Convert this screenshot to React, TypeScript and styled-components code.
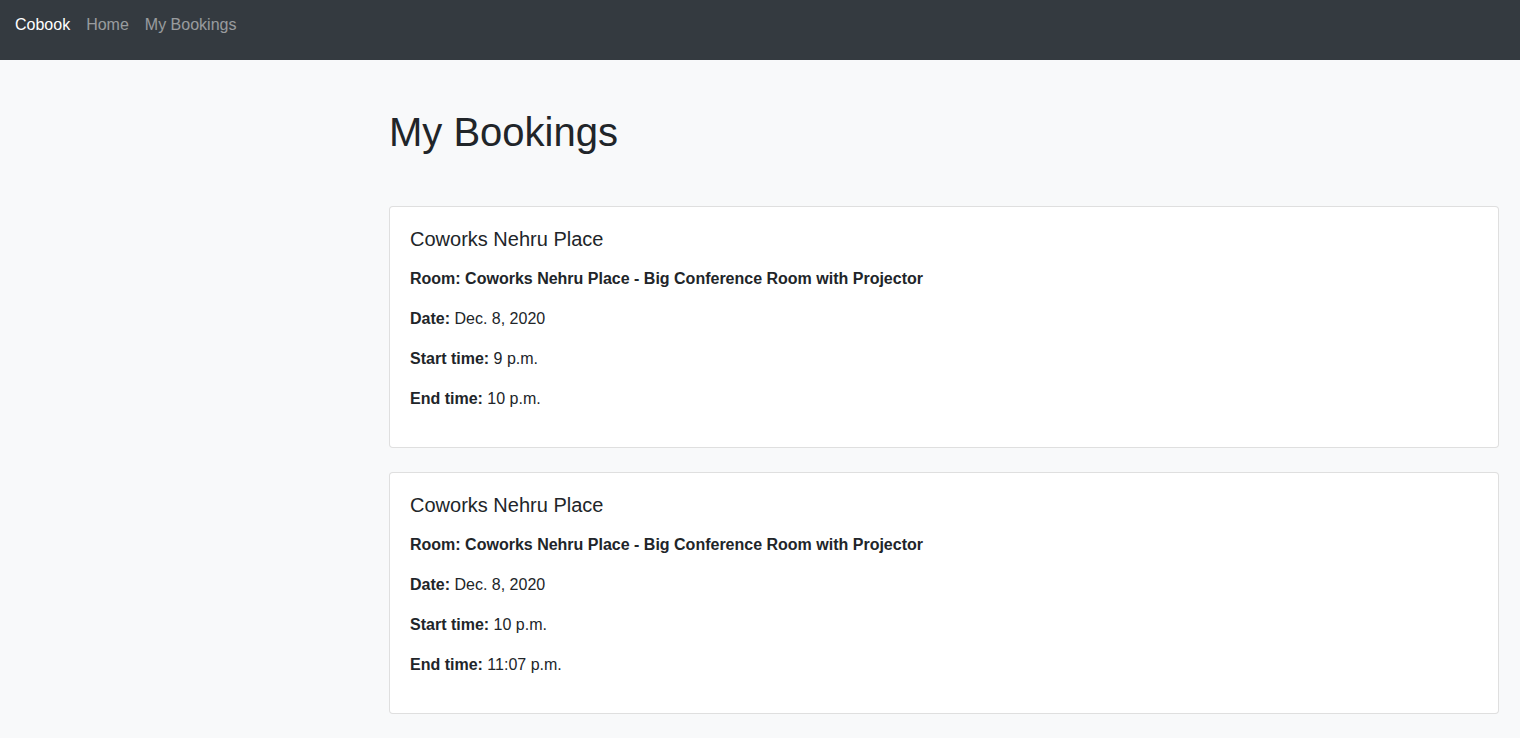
import React from "react";
import styled, { createGlobalStyle } from "styled-components";

const GlobalStyle = createGlobalStyle`
  html, body { margin: 0; padding: 0; }
  body {
    background: #f8f9fa;
    color: #212529;
    font-family: "Liberation Sans", Arial, sans-serif;
    font-size: 16px;
    line-height: 1.5;
  }
  * { box-sizing: border-box; }
`;

const NavBar = styled.nav`
  height: 60px;
  background: #343a40;
  display: flex;
  align-items: flex-start;
  gap: 16px;
  padding: 13px 15px;
`;

const NavLink = styled.a<{ $brand?: boolean }>`
  color: ${(p) => (p.$brand ? "#ffffff" : "rgba(255,255,255,0.5)")};
  text-decoration: none;
  font-size: 16px;
  line-height: 24px;
  cursor: pointer;
`;

const Main = styled.main`
  padding: 48px 21px 24px 389px;
`;

const Title = styled.h1`
  margin: 0 0 50px;
  font-size: 40px;
  font-weight: 400;
  line-height: 48px;
`;

const CardList = styled.div`
  display: flex;
  flex-direction: column;
  gap: 24px;
`;

const Card = styled.div`
  background: #fff;
  border: 1px solid rgba(0, 0, 0, 0.125);
  border-radius: 4px;
  padding: 20px 20px 20px;
`;

const CardTitle = styled.h5`
  margin: 0 0 16px;
  font-size: 20px;
  font-weight: 400;
  line-height: 24px;
`;

const Line = styled.p`
  margin: 0 0 16px;
  line-height: 24px;
`;

const bookings = [
  { place: "Coworks Nehru Place", room: "Coworks Nehru Place - Big Conference Room with Projector", date: "Dec. 8, 2020", start: "9 p.m.", end: "10 p.m." },
  { place: "Coworks Nehru Place", room: "Coworks Nehru Place - Big Conference Room with Projector", date: "Dec. 8, 2020", start: "10 p.m.", end: "11:07 p.m." },
];

export default function App() {
  return (
    <>
      <GlobalStyle />
      <NavBar>
        <NavLink $brand>Cobook</NavLink>
        <NavLink>Home</NavLink>
        <NavLink>My Bookings</NavLink>
      </NavBar>
      <Main>
        <Title>My Bookings</Title>
        <CardList>
          {bookings.map((b, i) => (
            <Card key={i}>
              <CardTitle>{b.place}</CardTitle>
              <Line><b>Room: {b.room}</b></Line>
              <Line><b>Date:</b> {b.date}</Line>
              <Line><b>Start time:</b> {b.start}</Line>
              <Line><b>End time:</b> {b.end}</Line>
            </Card>
          ))}
        </CardList>
      </Main>
    </>
  );
}
